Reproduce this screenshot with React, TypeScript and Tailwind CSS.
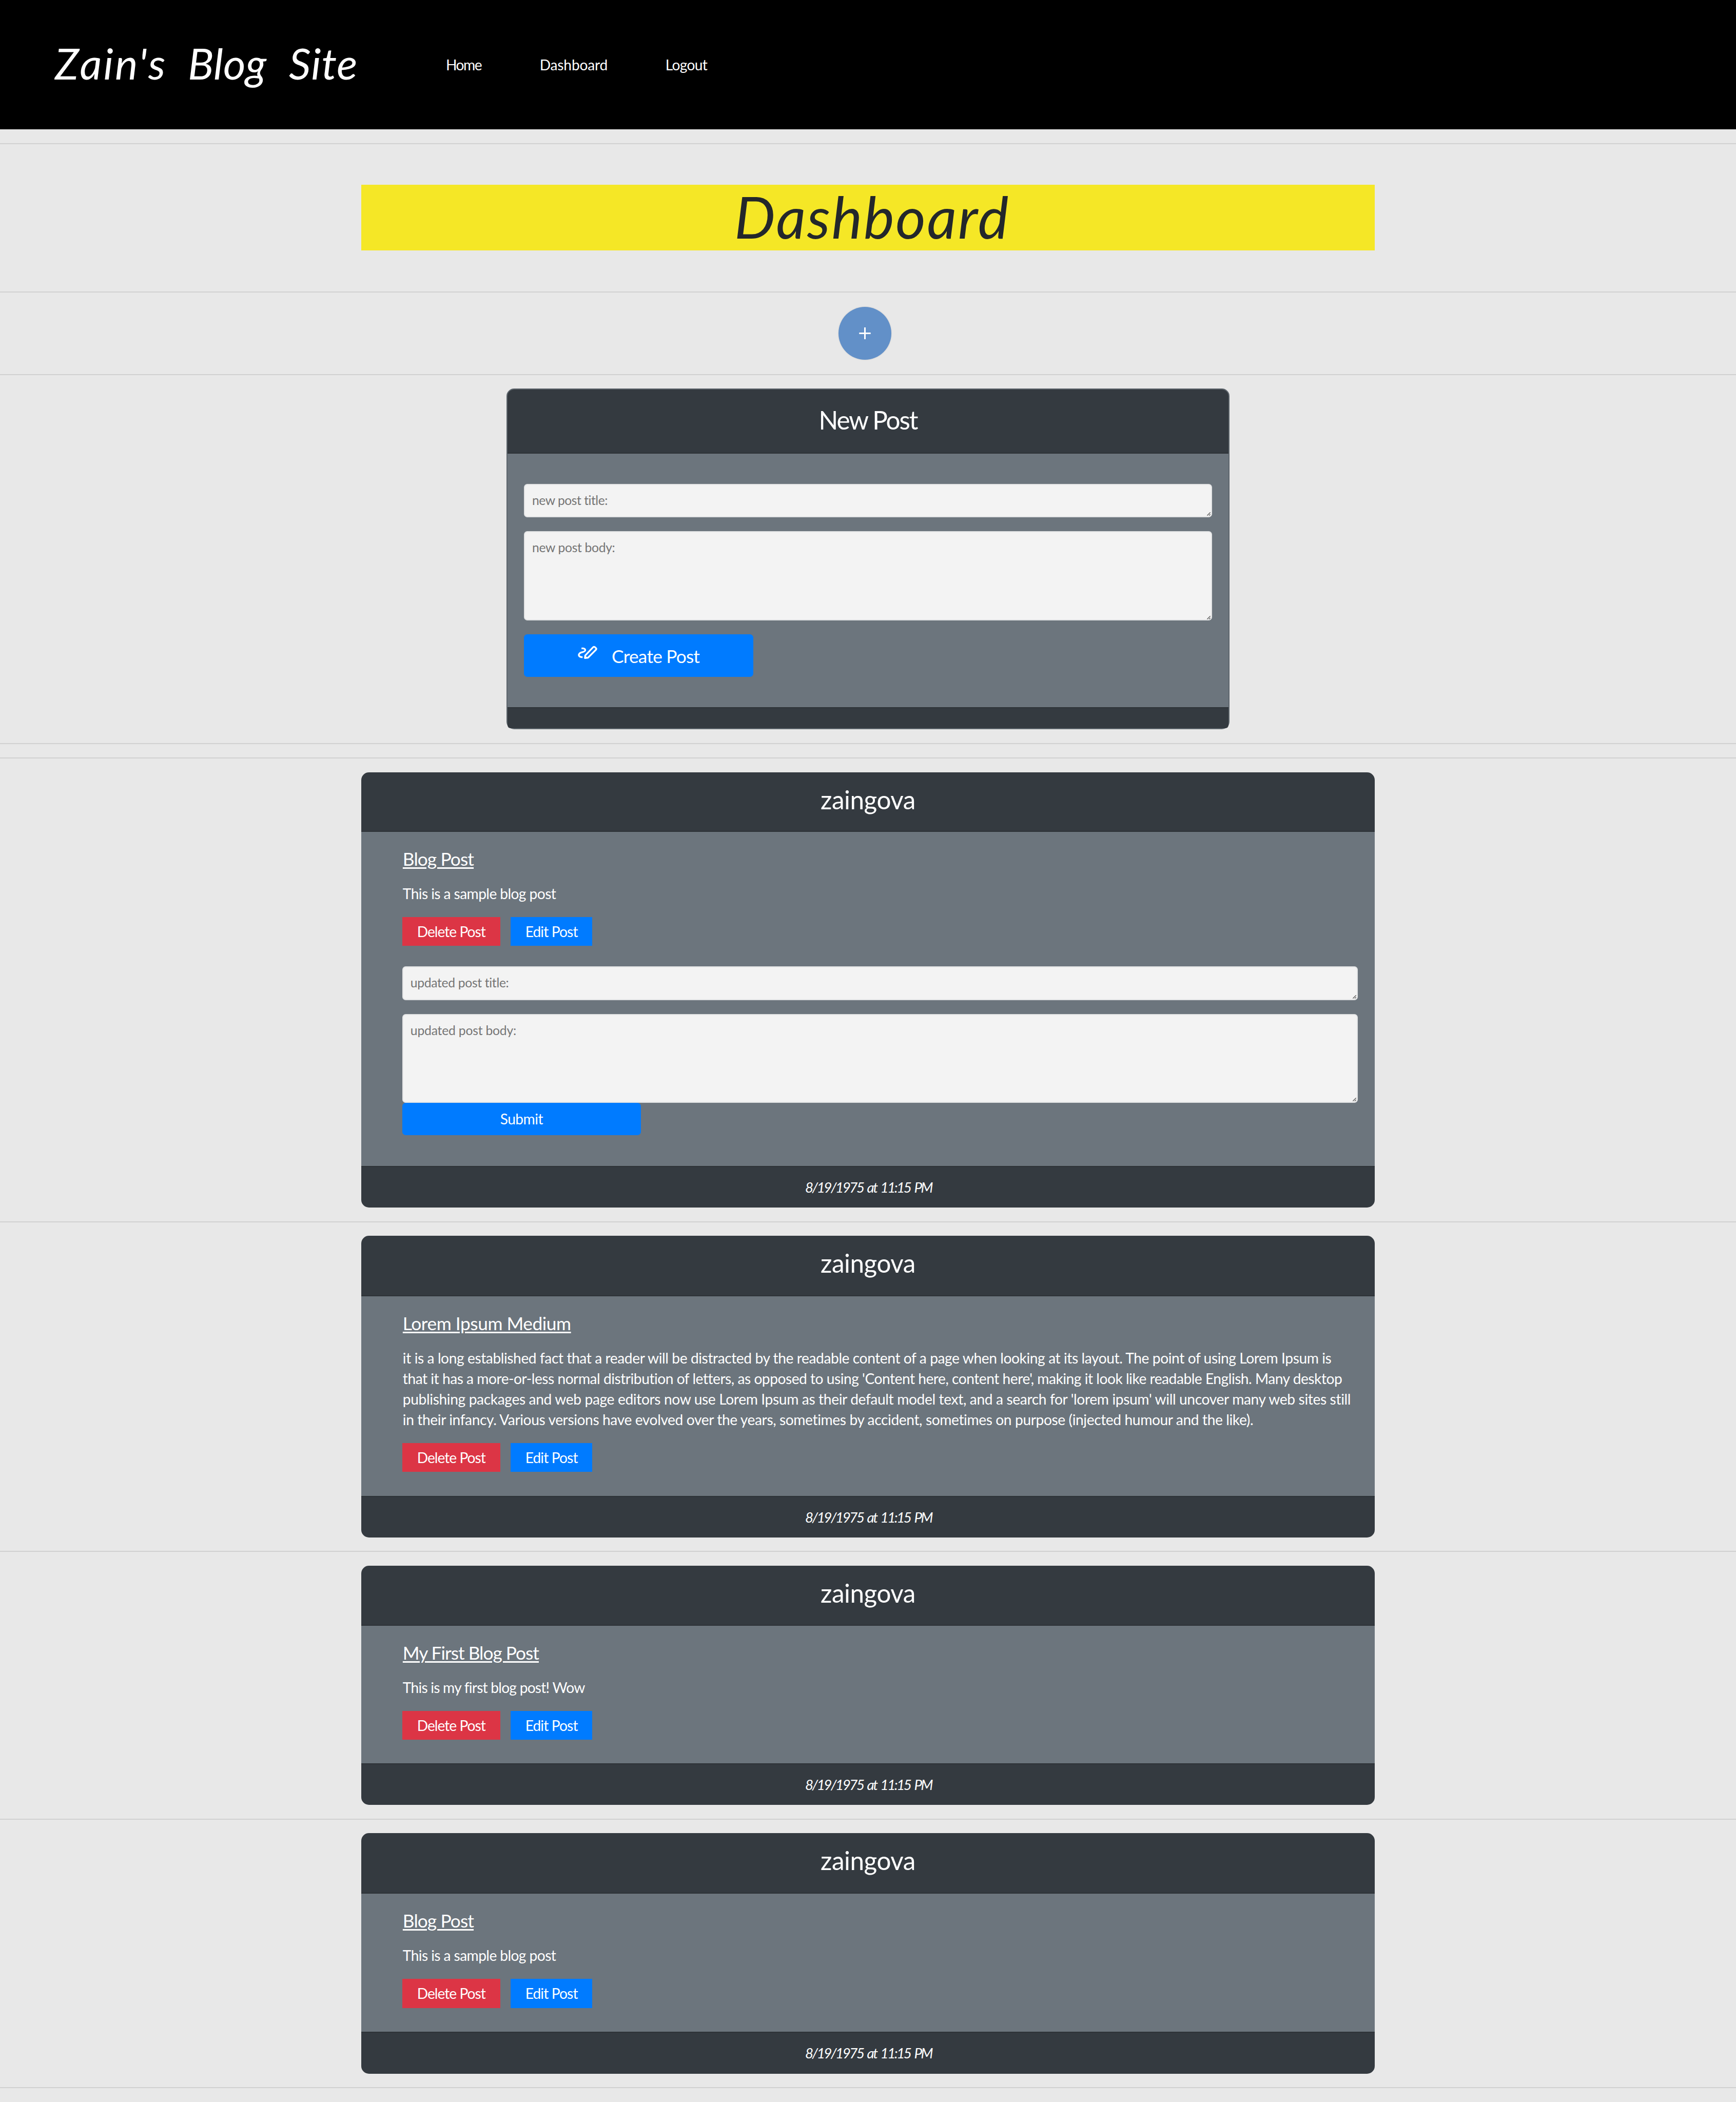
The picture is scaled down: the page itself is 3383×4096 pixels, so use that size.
import type { ReactNode } from "react";

function Rule() {
  return <div className="my-[26.4px] h-[2px] w-full bg-[#d1d1d1]" />;
}

function Navbar() {
  return (
    <nav className="flex h-[252.4px] items-center bg-black text-white">
      <a className="flex w-[869px] pb-[7px] pl-[107px] text-[84px] leading-none italic">
        <span className="w-[259px] tracking-[3.2px]">Zain's</span>
        <span className="w-[197px] tracking-[0.2px]">Blog</span>
        <span className="tracking-[0.9px]">Site</span>
      </a>
      <a className="w-[182.7px] text-[28.2px] tracking-[-1.5px]">Home</a>
      <a className="w-[245px] text-[28.2px] tracking-[-0.2px]">Dashboard</a>
      <a className="text-[28.2px] tracking-[-0.7px]">Logout</a>
    </nav>
  );
}

function Field({ placeholder, className }: { placeholder: string; className: string }) {
  return (
    <div className="relative">
      <textarea
        placeholder={placeholder}
        className={
          "block w-full resize-none overflow-hidden rounded-[6.6px] border-2 border-[#e3e4e5] bg-[#f3f3f3] pt-[11px] pl-[14px] text-[24.7px] leading-[37px] placeholder:text-[#757575] " +
          className
        }
      />
      <svg className="absolute right-[2.5px] bottom-[2.5px] size-[7px]" viewBox="0 0 7 7" stroke="#555" strokeWidth="1.3">
        <path d="M0.4 6.6 L6.6 0.4 M4 6.6 L6.6 4" />
      </svg>
    </div>
  );
}

function WriteIcon() {
  return (
    <svg
      className="mt-[22.5px] h-[26.6px] w-[38.75px] self-start"
      viewBox="50 75 140 96"
      fill="none"
      stroke="white"
      strokeWidth="12"
      strokeLinejoin="round"
    >
      <path d="M76 95 C96 93 104 100 102 109 C99 120 82 120 70 125 C58 130 53 142 61 150 C66 155 74 157 84 157" />
      <path d="M102 145 L157 87 Q163 80 170 86 L178 93 Q183 99 178 104 L122 160 L100 163 Z" />
      <path d="M103 146 L121 162 L98 165 Z" fill="white" stroke="none" />
    </svg>
  );
}

function NewPostCard() {
  return (
    <section className="mx-auto flex h-[664.3px] w-[1409.6px] flex-col rounded-[15px] border-2 border-[#5e666d] bg-[#6c757d]">
      <h3 className="h-[124.6px] rounded-t-[13px] border-b-2 border-[#2e3338] bg-[#343a40] text-center text-[49.4px] leading-[118px] tracking-[-2.1px] text-white">
        New Post
      </h3>
      <div className="flex-1 px-[32.4px] pt-[59.3px]">
        <Field placeholder="new post title:" className="h-[64.8px] tracking-[-0.5px]" />
        <div className="h-[26.9px]" />
        <Field placeholder="new post body:" className="h-[174.5px] tracking-[-0.35px]" />
        <button className="mt-[26.6px] flex h-[83px] w-[446.7px] items-center gap-[27px] rounded-[6.6px] bg-[#007bff] pl-[105.2px] text-white">
          <WriteIcon />
          <span className="pt-[4px] text-[35.3px] tracking-[-0.8px]">Create Post</span>
        </button>
      </div>
      <div className="h-[41.3px] rounded-b-[6px] border-t-2 border-[#2e3338] bg-[#343a40]" />
    </section>
  );
}

type PostProps = {
  title: string;
  titleClass: string;
  headerClass: string;
  bodyClass: string;
  children: ReactNode;
  form?: ReactNode;
};

function PostCard({ title, titleClass, headerClass, bodyClass, children, form }: PostProps) {
  return (
    <section className="mx-auto w-[1974.7px] overflow-hidden rounded-[15px] bg-[#343a40] text-white">
      <h3
        className={
          "border-b-2 border-[#2e3338] text-center text-[49.4px] leading-[107px] tracking-[-0.45px] " + headerClass
        }
      >
        zaingova
      </h3>
      <div className={"bg-[#6c757d] pt-[27.2px] pr-[33.3px] pl-[79.7px] " + bodyClass}>
        <h4
          className={
            "ml-px text-[35.3px] leading-[52.6px] underline decoration-[3px] underline-offset-[2.5px] " + titleClass
          }
        >
          {title}
        </h4>
        <div className="mt-[21.5px] mb-[24.9px] ml-px text-[28.2px] leading-[39.86px] whitespace-nowrap">{children}</div>
        <div className="flex gap-[20.2px] text-[28.2px]">
          <button className="h-[56.5px] w-[191px] bg-[#dc3545] tracking-[-1px]">Delete Post</button>
          <button className="h-[56.5px] w-[159.2px] bg-[#007bff] tracking-[-0.9px]">Edit Post</button>
        </div>
        {form}
      </div>
      <p className="h-[81.4px] border-t-2 border-[#2e3338] pl-[2px] text-center text-[27.8px] leading-[80px] tracking-[-2.5px] [word-spacing:3px] italic">
        8/19/1975 at 11:15 PM
      </p>
    </section>
  );
}

function EditForm() {
  return (
    <form className="mt-[40px]">
      <Field placeholder="updated post title:" className="h-[65.4px] tracking-[-0.33px]" />
      <div className="h-[27px]" />
      <Field placeholder="updated post body:" className="h-[173px] tracking-[-0.2px]" />
      <button
        type="button"
        className="block h-[62.8px] w-[465px] rounded-[6.6px] bg-[#007bff] text-[28.2px] leading-[61px] tracking-[-0.55px]"
      >
        Submit
      </button>
    </form>
  );
}

export default function App() {
  return (
    <div className="flow-root h-[4096px] w-[3383px] overflow-hidden bg-[#e8e8e8] font-['Lato',sans-serif]">
      <Navbar />
      <Rule />
      <div className="py-[53.1px]">
        <h1 className="mx-auto h-[127.9px] w-[1974.7px] bg-[#f5e726] pl-[16px] text-center text-[112.9px] leading-[123px] tracking-[2.6px] text-[#23272b] italic">
          Dashboard
        </h1>
      </div>
      <Rule />
      <div className="flex h-[106.3px] items-center justify-center pr-[11.6px]">
        <button className="flex size-[103px] items-center justify-center rounded-full bg-[#6290c8] shadow-[0_0_3px_rgba(0,0,0,0.12)]">
          <svg className="mr-px size-[23px]" viewBox="0 0 23 23" stroke="white" strokeWidth="3">
            <path d="M11.5 0 V23 M0.3 11.5 H22.7" />
          </svg>
        </button>
      </div>
      <Rule />
      <NewPostCard />
      <Rule />
      <Rule />
      <PostCard
        title="Blog Post"
        titleClass="tracking-[-0.9px]"
        headerClass="h-[116.3px]"
        bodyClass="h-[651px]"
        form={<EditForm />}
      >
        <p className="tracking-[-0.6px]">This is a sample blog post</p>
      </PostCard>
      <Rule />
      <PostCard
        title="Lorem Ipsum Medium"
        titleClass="tracking-[-0.45px]"
        headerClass="h-[117.9px]"
        bodyClass="h-[388.6px]"
      >
        <p className="tracking-[-0.433px]">
          it is a long established fact that a reader will be distracted by the readable content of a page when looking
          at its layout. The point of using Lorem Ipsum is
        </p>
        <p className="tracking-[-0.496px]">
          that it has a more-or-less normal distribution of letters, as opposed to using 'Content here, content here',
          making it look like readable English. Many desktop
        </p>
        <p className="tracking-[-0.381px]">
          publishing packages and web page editors now use Lorem Ipsum as their default model text, and a search for
          'lorem ipsum' will uncover many web sites still
        </p>
        <p className="tracking-[-0.41px]">
          in their infancy. Various versions have evolved over the years, sometimes by accident, sometimes on purpose
          (injected humour and the like).
        </p>
      </PostCard>
      <Rule />
      <PostCard
        title="My First Blog Post"
        titleClass="tracking-[-1px]"
        headerClass="h-[117.1px]"
        bodyClass="h-[268.2px]"
      >
        <p className="tracking-[-0.78px]">This is my first blog post! Wow</p>
      </PostCard>
      <Rule />
      <PostCard
        title="Blog Post"
        titleClass="tracking-[-0.9px]"
        headerClass="h-[117.9px]"
        bodyClass="h-[269.1px]"
      >
        <p className="tracking-[-0.6px]">This is a sample blog post</p>
      </PostCard>
      <Rule />
    </div>
  );
}
